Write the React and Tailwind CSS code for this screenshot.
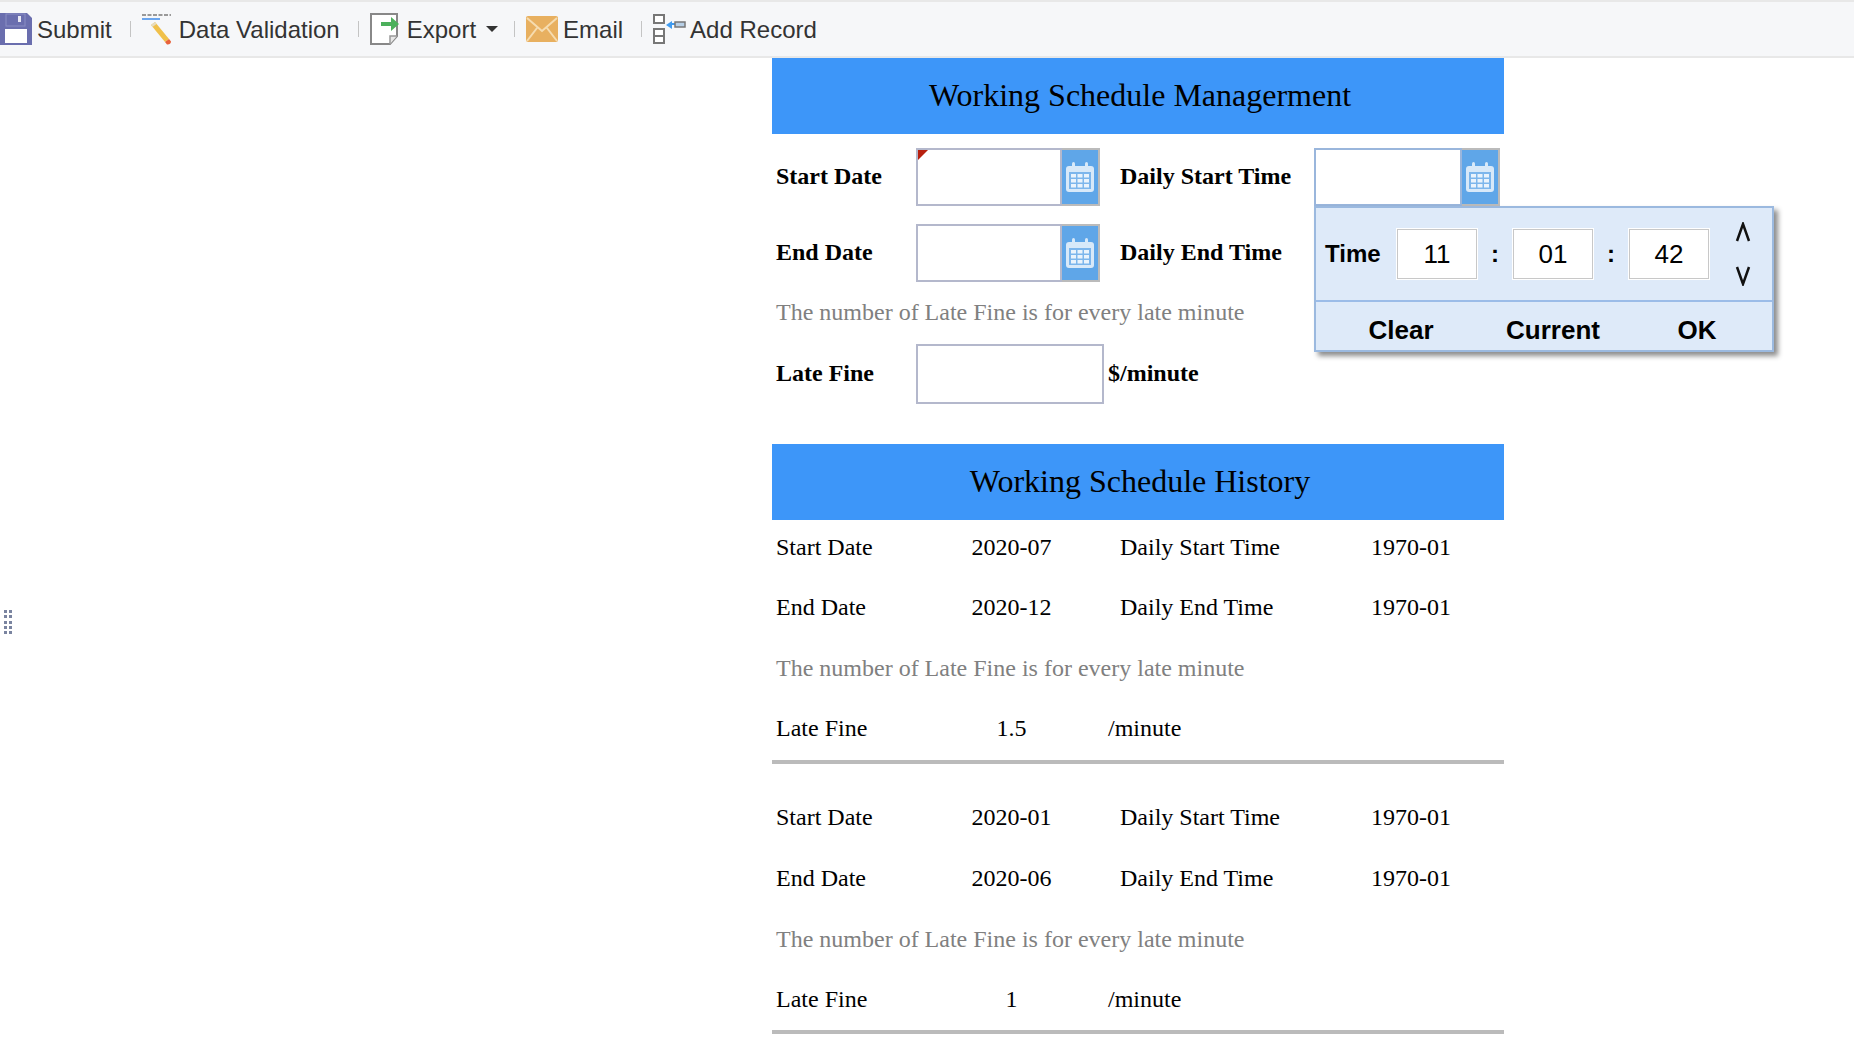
import React from 'react';

const serif = "font-['Liberation_Serif',serif]";

const SaveIcon = () => (
  <svg width="32" height="32" viewBox="0 0 32 32" className="shrink-0">
    <path d="M0 0h27l5 5v27H0z" fill="#6a6eae" />
    <rect x="6" y="1" width="19" height="12" fill="#6a6eae" stroke="#8a8ec4" />
    <rect x="18" y="3" width="3" height="6" fill="#e8e8f4" />
    <rect x="5" y="16" width="22" height="14" fill="#fff" />
  </svg>
);

const ValidationIcon = () => (
  <svg width="32" height="32" viewBox="0 0 32 32" className="shrink-0">
    <path d="M0 2h29" stroke="#999" strokeWidth="2" strokeDasharray="4 1.5" />
    <path d="M0 6h18" stroke="#6aa5ee" strokeWidth="2" />
    <path d="M9 12l4-3 14 17-4 3z" fill="#f0c04a" />
    <path d="M9 12l4-3 1.5 2-4 3z" fill="#e6dcc0" />
    <path d="M23 29l4-3 2 2.5c0 2-2 3.500-4 3z" fill="#e8623a" />
  </svg>
);

const ExportIcon = () => (
  <svg width="32" height="32" viewBox="0 0 32 32" className="shrink-0">
    <path d="M1 1h26v22l-7 8H1z" fill="#fff" stroke="#888" strokeWidth="2" />
    <path d="M20 31v-8h7" fill="#e8e8e8" stroke="#999" strokeWidth="1.500" />
    <path d="M11 9h10V4l8 7-8 7v-5H11z" fill="#4cb05c" />
  </svg>
);

const EmailIcon = () => (
  <svg width="32" height="26" viewBox="0 0 32 26" className="shrink-0">
    <rect width="32" height="26" rx="2" fill="#e8b060" />
    <path d="M1 2l15 13L31 2M1 25l10-13M31 25L21 12" fill="none" stroke="#f6dcb0" strokeWidth="2" />
  </svg>
);

const AddRecordIcon = () => (
  <svg width="33" height="30" viewBox="0 0 33 30" className="shrink-0">
    <rect x="1" y="1" width="10" height="8" fill="#fff" stroke="#777" strokeWidth="2" />
    <rect x="1" y="15" width="10" height="14" fill="#fff" stroke="#777" strokeWidth="2" />
    <path d="M1 22h10" stroke="#777" strokeWidth="2" />
    <path d="M13 11l6-4v8z" fill="#3f9bf0" />
    <path d="M18 10h4" stroke="#3f9bf0" strokeWidth="2" />
    <rect x="22" y="8" width="10" height="5" fill="#b7cfe6" stroke="#777" strokeWidth="1.500" />
  </svg>
);

const CalendarIcon = () => (
  <svg width="28" height="30" viewBox="0 0 28 30">
    <path d="M3 4h22a3 3 0 0 1 3 3v20a3 3 0 0 1-3 3H3a3 3 0 0 1-3-3V7a3 3 0 0 1 3-3z" fill="#d8e9f9" />
    <rect x="6" y="0" width="3" height="6" rx="1.500" fill="#d8e9f9" />
    <rect x="19" y="0" width="3" height="6" rx="1.500" fill="#d8e9f9" />
    <rect x="3" y="10" width="22" height="17" fill="#7db6ec" />
    <g fill="#eaf3fc">
      <rect x="5" y="12" width="5" height="3.500" /><rect x="11.500" y="12" width="5" height="3.500" /><rect x="18" y="12" width="5" height="3.500" />
      <rect x="5" y="17" width="5" height="3.500" /><rect x="11.500" y="17" width="5" height="3.500" /><rect x="18" y="17" width="5" height="3.500" />
      <rect x="5" y="22" width="5" height="3.500" /><rect x="11.500" y="22" width="5" height="3.500" /><rect x="18" y="22" width="5" height="3.500" />
    </g>
  </svg>
);

const Sep = () => <span className="w-px h-[16px] bg-[#c4c4c4] ml-[18px] mr-[11px] shrink-0" />;

const DateInput = ({ marker, active }) => (
  <div className={`relative flex h-[58px] bg-white ${active ? 'w-[186px]' : 'w-[184px]'}`}>
    <div className={`relative flex-1 border-2 ${active ? 'border-[#9ab6dc]' : 'border-[#b4b8cc]'}`}>
      {marker && <span className="absolute left-0 top-0 w-0 h-0 border-t-[10px] border-r-[10px] border-t-[#b8200f] border-r-transparent" />}
    </div>
    <div className="w-[38px] bg-[#5fa6e8] border-y-2 border-r-2 border-[#bbbbbb] flex items-center justify-center">
      <CalendarIcon />
    </div>
  </div>
);

const Header = ({ children }) => (
  <div className={`h-[76px] bg-[#3d96f9] flex items-center justify-center text-[32px] text-black pl-[4px] pb-[2px] ${serif}`}>
    {children}
  </div>
);

const Row = ({ h, children, className = '' }) => (
  <div className={`grid grid-cols-[144px_188px_210px_190px] items-center text-[24px] ${h} ${className}`}>
    {children}
  </div>
);

const History = ({ start, end, fine, tall, topShift, bottomShift }) => (
  <div className="text-black">
    <Row h="h-[60px]" className={topShift}>
      <span className="pl-1">Start Date</span>
      <span className="text-center pl-[3px]">{start}</span>
      <span className="pl-4">Daily Start Time</span>
      <span className="text-center pl-[4px]">1970-01</span>
    </Row>
    <Row h={tall ? 'h-[61px]' : 'h-[60px]'} className={topShift}>
      <span className="pl-1">End Date</span>
      <span className="text-center pl-[3px]">{end}</span>
      <span className="pl-4">Daily End Time</span>
      <span className="text-center pl-[4px]">1970-01</span>
    </Row>
    <div className={`h-[60px] flex items-center pl-1 text-[24px] text-[#808080] ${bottomShift}`}>The number of Late Fine is for every late minute</div>
    <Row h="h-[60px]" className={bottomShift}>
      <span className="pl-1">Late Fine</span>
      <span className="text-center pl-[3px]">{fine}</span>
      <span className="pl-1">/minute</span>
    </Row>
    <div className="h-[4px] bg-[#bbbbbb] mt-[1px]" />
  </div>
);

const TimeBox = ({ value }) => (
  <div className="w-[80px] h-[50px] bg-white border border-[#c8c8c8] shadow-[0_0_0_1px_#ffffff] flex items-center justify-center text-[26px] text-black">
    {value}
  </div>
);

const TimePopup = () => (
  <div className="absolute left-[542px] top-[148px] w-[460px] h-[146px] bg-[#deeaf9] border-2 border-[#9bb9df] shadow-[4px_4px_5px_rgba(0,0,0,0.45)] font-['Liberation_Sans',sans-serif] text-black z-10">
    <div className="h-[94px] flex items-center border-b-2 border-[#9bbce8] pl-[9px]">
      <span className="text-[24px] font-bold w-[72px]">Time</span>
      <TimeBox value="11" />
      <span className="w-[36px] text-center text-[24px] font-bold">:</span>
      <TimeBox value="01" />
      <span className="w-[36px] text-center text-[24px] font-bold">:</span>
      <TimeBox value="42" />
      <div className="flex flex-col items-center ml-[26px] gap-[24px]">
        <svg width="16" height="20" viewBox="0 0 16 20"><path d="M2 19L8 2l6 17" fill="none" stroke="#111" strokeWidth="2.500" /></svg>
        <svg width="16" height="20" viewBox="0 0 16 20"><path d="M2 1l6 17 6-17" fill="none" stroke="#111" strokeWidth="2.500" /></svg>
      </div>
    </div>
    <div className="flex items-center h-[48px] pt-[8px] text-[26px] font-bold">
      <span className="w-[160px] text-center pl-[10px]">Clear</span>
      <span className="w-[146px] text-center ml-[4px]">Current</span>
      <span className="w-[120px] text-center ml-[11px]">OK</span>
    </div>
  </div>
);

export default function App() {
  return (
    <div className="h-[1062px] bg-white overflow-hidden relative">
      <div className="h-[58px] bg-[#f6f7f9] border-t-2 border-b-2 border-[#e8e8e8] flex items-center text-[24px] text-[#333333] font-['Liberation_Sans',sans-serif]">
        <SaveIcon />
        <span className="ml-[5px] pt-[2px]">Submit</span>
        <Sep />
        <ValidationIcon />
        <span className="ml-[5px] pt-[2px]">Data Validation</span>
        <Sep />
        <ExportIcon />
        <span className="ml-[5px] pt-[2px]">Export</span>
        <span className="ml-[10px] w-0 h-0 border-x-[6px] border-t-[6px] border-x-transparent border-t-[#333333]" />
        <span className="w-px h-[16px] bg-[#c4c4c4] ml-[16px] mr-[11px] shrink-0" />
        <EmailIcon />
        <span className="ml-[5px] pt-[2px]">Email</span>
        <Sep />
        <AddRecordIcon />
        <span className="ml-[4px] pt-[2px]">Add Record</span>
      </div>

      {/* drag handle */}
      <div className="flex flex-col gap-[2.33px] absolute left-[4px] top-[610px]">
        {[0, 1, 2, 3, 4].map((i) => (
          <div key={i} className="flex gap-[2px]">
            <span className="w-[3px] h-[3px] bg-[#7a84a0]" />
            <span className="w-[3px] h-[3px] bg-[#7a84a0]" />
          </div>
        ))}
      </div>

      <div className={`relative ml-[772px] w-[732px] ${serif}`}>
        <Header>Working Schedule Managerment</Header>
        <div className="font-bold text-black">
          <Row h="h-[58px]" className="mt-[14px]">
            <span className="pl-1 pb-[2px]">Start Date</span>
            <DateInput marker />
            <span className="pl-4 pb-[2px]">Daily Start Time</span>
            <DateInput active />
          </Row>
          <Row h="h-[58px]" className="mt-[18px]">
            <span className="pl-1 pb-[2px]">End Date</span>
            <DateInput />
            <span className="pl-4 pb-[2px]">Daily End Time</span>
            <div />
          </Row>
          <div className="h-[62px] flex items-center pl-1 pb-[2px] font-normal text-[24px] text-[#808080]">The number of Late Fine is for every late minute</div>
          <Row h="h-[60px]">
            <span className="pl-1 pb-[2px]">Late Fine</span>
            <div className="w-[188px] h-[60px] border-2 border-[#b4b8cc] bg-white" />
            <span className="pl-1 pb-[2px]">$/minute</span>
          </Row>
        </div>
        <TimePopup />
        <div className="mt-[40px] mb-[-1px]">
          <Header>Working Schedule History</Header>
        </div>
        <History start="2020-07" end="2020-12" fine="1.5" topShift="pb-[4px]" bottomShift="pb-[2px]" />
        <div className="h-[24px]" />
        <History start="2020-01" end="2020-06" fine="1" tall topShift="pb-[2px]" bottomShift="" />
      </div>
    </div>
  );
}
